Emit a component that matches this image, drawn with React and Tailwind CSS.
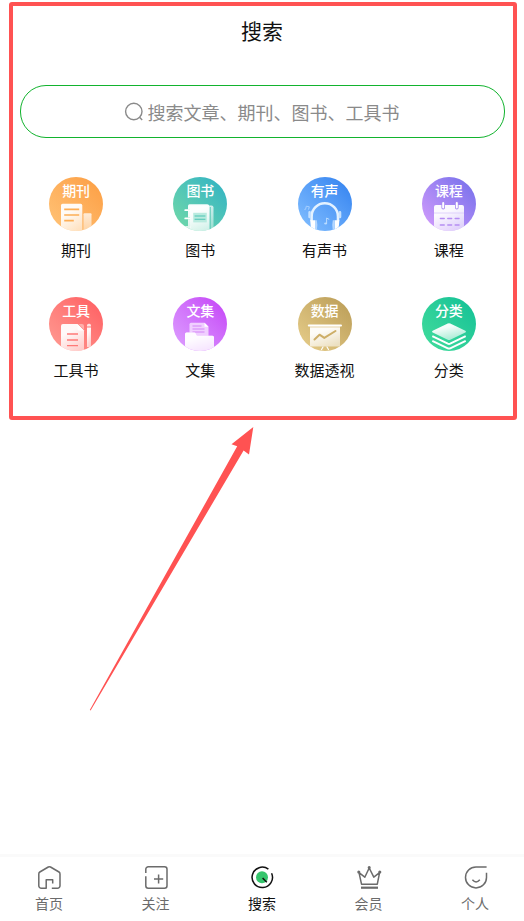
import React from "react";

function Journal() {
  return (
    <>
      <rect x="34.5" y="36.3" width="8" height="20" rx="1" fill="url(#fade)" />
      <rect x="12" y="26.8" width="21.3" height="30" rx="1.6" fill="url(#sheet)" />
      <path d="M15.2 32.3h15M15.2 38h15M15.2 43.6h9.6" stroke="#fdae55" strokeWidth="1.7" />
    </>
  );
}

function Book() {
  return (
    <>
      <path d="M17 28.4h21.5q2 0 2 2V54H17z" fill="url(#fade)" />
      <path d="M37.3 30v24" stroke="#5cc8b6" strokeWidth="0.9" />
      <path
        d="M16.6 27.3h17.6q2 0 2 2V54H15v-3.2h2v-1.6h-2v-7h2v-1.6h-2V34h2v-1.6h-2V29q0-1.7 1.6-1.7z"
        fill="url(#sheet)"
      />
      <path d="M12.2 33.2h4.6M12.2 41.4h4.6M12.2 50h4.6" stroke="#fff" strokeWidth="1.7" strokeLinecap="round" />
      <rect x="20.2" y="35.8" width="13.6" height="9.6" fill="#b9ebdf" />
      <path d="M21.6 39h10.8M21.6 42.2h10.8" stroke="#4cc4b4" strokeWidth="1.1" />
    </>
  );
}

function Headphones() {
  return (
    <>
      <path d="M13.6 44v-4.5a13.200 13.200 0 0 1 26.400 0V44" fill="none" stroke="#e4f2ff" strokeWidth="2.6" />
      <path d="M11.6 35.400v4.600M42 35.400v4.600" stroke="#c3e0ff" strokeWidth="2.6" strokeLinecap="round" />
      <path d="M12.200 43.200h4.800v10h-2.800q-2-4.500-2-10zM36.600 43.200h4.800q0 5.500-2 10h-2.800z" fill="#fff" />
      <path d="M17 43.200h1.800q1.200 5 0 10H17zM34.800 43.200h1.800v10h-1.800q-1.200-5 0-10z" fill="#b4d7ff" />
      <path d="M28.600 46.500v-5.500l2.600 1.400" fill="none" stroke="#b9dbff" strokeWidth="1" />
      <ellipse cx="27.6" cy="46.5" rx="1.5" ry="1.1" fill="#b9dbff" />
      <path d="M7.600 32.200l.7-3 3 .6-.8 2.800M6.400 32.400h1.200" fill="none" stroke="#a6cfff" strokeWidth="1" />
    </>
  );
}

function Calendar() {
  return (
    <>
      <rect x="12" y="28" width="30" height="28" rx="2" fill="url(#sheet)" />
      <path d="M12 36h30" stroke="#d9c9fb" strokeWidth="0.8" />
      <path d="M21.2 26v4.8M34.8 26v4.8" stroke="#a78af0" strokeWidth="3.6" strokeLinecap="round" />
      <path d="M21.2 26v4.4M34.8 26v4.4" stroke="#fff" strokeWidth="2" strokeLinecap="round" />
      <path
        d="M18.400 41.600h3.800M25.800 41.600h3.800M33.200 41.600h3.800M18.400 48h3.800M25.800 48h3.800M33.200 48h3.800"
        stroke="#b58df2"
        strokeWidth="1.5"
        strokeLinecap="round"
      />
    </>
  );
}

function Tools() {
  return (
    <>
      <path d="M14 27h14.500l6.500 6.500V56H12V29q0-2 2-2z" fill="url(#sheet)" />
      <path d="M28.500 27v5q0 1.500 1.500 1.500h5z" fill="#fff" />
      <path d="M29.500 27H33q2 0 2 2v3.500z" fill="#ffb0ac" />
      <path d="M18 37h11M18 43h11M18 48.600h11" stroke="#ff7a78" strokeWidth="1.3" />
      <path d="M38 28.400q0-1.600 1.600-1.600h.8q1.600 0 1.600 1.600v1.200h-4z" fill="#ffe2e0" />
      <path d="M38 30.400h4V50h-4z" fill="url(#sheet)" />
    </>
  );
}

function Collection() {
  return (
    <>
      <path d="M18 25.800h13.500l4 4V42H16.500V27.300q0-1.500 1.500-1.500z" fill="#f0cfff" />
      <path d="M31.500 25.800v4h4z" fill="#fff" />
      <path d="M19.500 29h9M19.500 32h12M19.500 35h12" stroke="#cf7cf6" strokeWidth="0.9" />
      <path
        d="M13.500 35.600h7.800q1 0 1.500 1l.6 1.400q.4.8 1.400.8h14.700q1.500 0 1.500 1.500V56H12V37.100q0-1.500 1.500-1.500z"
        fill="#e9bcff"
      />
      <path
        d="M13.500 35.600h7.800q1 0 1.500 1l.6 1.400q.4.8 1.400.8h14.700q1.500 0 1.500 1.500V56H12V37.100q0-1.500 1.500-1.500z"
        fill="url(#sheet)"
      />
    </>
  );
}

function Data() {
  return (
    <>
      <path d="M12 29h30v20.500H12z" fill="url(#sheet)" />
      <rect x="9.8" y="27.6" width="34.2" height="2" rx="1" fill="#fff" />
      <path d="M12 30h30" stroke="#dcc388" strokeWidth="0.7" />
      <path
        d="M16.500 42.500l5-4.800 4.800 3.200 11.200-6.900"
        fill="none"
        stroke="#cdae67"
        strokeWidth="2"
        strokeLinecap="round"
        strokeLinejoin="round"
      />
      <path d="M23.500 52.500l1.500-2.500M30.500 52.500l-1.500-2.500" stroke="#fff" strokeWidth="1.2" strokeLinecap="round" />
    </>
  );
}

function Layers() {
  return (
    <>
      <path
        d="M28.300 26.600l15 7.100q1.600.9 0 1.800l-15 7.200q-1.300.6-2.600 0l-15-7.200q-1.600-.9 0-1.800l15-7.100q1.300-.6 2.600 0z"
        fill="url(#sheet)"
      />
      <path
        d="M10.300 39.200l15.500 7.500q1.200.5 2.400 0l15.500-7.500M10.300 43.800l15.500 7.500q1.200.5 2.400 0l15.500-7.500"
        fill="none"
        stroke="#fff"
        strokeWidth="1.9"
      />
    </>
  );
}

const categories = [
  { badge: "期刊", label: "期刊", Art: Journal, tone: "from-[#ffc478] to-[#fc9d40]" },
  { badge: "图书", label: "图书", Art: Book, tone: "from-[#72daa6] to-[#2bb1c4]" },
  { badge: "有声", label: "有声书", Art: Headphones, tone: "from-[#84c0ff] to-[#2f80ef]" },
  { badge: "课程", label: "课程", Art: Calendar, tone: "from-[#d79dfc] to-[#726dea]" },
  { badge: "工具", label: "工具书", Art: Tools, tone: "from-[#ff9c94] to-[#ff5a60]" },
  { badge: "文集", label: "文集", Art: Collection, tone: "from-[#dda0ff] to-[#c43cf6]" },
  { badge: "数据", label: "数据透视", Art: Data, tone: "from-[#e8cf8c] to-[#b99b55]" },
  { badge: "分类", label: "分类", Art: Layers, tone: "from-[#41dd9c] to-[#0bc096]" },
];

function Category({ badge, label, Art, tone }) {
  return (
    <a href="#" className="flex flex-col items-center gap-[7px]">
      <span className={`flex size-[54px] flex-col items-center overflow-hidden rounded-full bg-linear-to-tr ${tone}`}>
        <span className="py-px text-sm/6 font-medium text-white">{badge}</span>
        <svg viewBox="0 26 54 28" className="h-7 w-[54px] overflow-visible" aria-hidden="true">
          <Art />
        </svg>
      </span>
      <span className="text-[15px]/6 text-[#111]">{label}</span>
    </a>
  );
}

const tabs = [
  {
    label: "首页",
    art: (
      <path d="M15.700 18.600v-3.900H9.200v8.600H4.400a2.600 2.600 0 0 1-2.600-2.600V8.900q0-1.300 1-1.900L11.300 2q1.100-.6 2.200 0l8.500 5q1 .6 1 1.900v11.800a2.600 2.600 0 0 1-2.600 2.600h-5.600" />
    ),
  },
  {
    label: "关注",
    art: (
      <path d="M1.800 8V4.300a2.500 2.500 0 0 1 2.500-2.500h16.200A2.500 2.500 0 0 1 23 4.300v16.500a2.500 2.500 0 0 1-2.500 2.500H4.300a2.500 2.500 0 0 1-2.500-2.500v-9.500M10 14h9.200M14.600 9.400v9.200" />
    ),
  },
  {
    label: "搜索",
    active: true,
    art: (
      <>
        <circle cx="12" cy="12.3" r="6" fill="#35c56c" stroke="none" />
        <path d="M18.400 4.200A10.200 10.200 0 1 0 21.600 8.200M12.600 13l4.200 4.200" />
      </>
    ),
  },
  {
    label: "会员",
    art: (
      <>
        <path d="M4.500 19.200L2 7.600l5.800 4.600L12.200 3l4.600 9.200L22.600 7.600l-2.300 11.600z" />
        <path d="M4 22.700h17" strokeWidth="2.2" />
        <circle cx="1.8" cy="7" r="0.8" fill="currentColor" />
        <circle cx="12.2" cy="2.5" r="0.8" fill="currentColor" />
        <circle cx="22.8" cy="7" r="0.8" fill="currentColor" />
      </>
    ),
  },
  {
    label: "个人",
    art: <path d="M23.600 1.900H13a10.500 10.500 0 1 0 10.500 10.500V7.800M9.400 14.800q3.700 4.200 7.400 0" />,
  },
];

function Tab({ label, art, active }) {
  return (
    <button
      type="button"
      aria-current={active ? "page" : undefined}
      className={`flex w-8 flex-col items-center gap-1 ${active ? "text-[#111]" : "text-[#6b6b6b]"}`}
    >
      <svg
        viewBox="0 0 24 24"
        fill="none"
        stroke="currentColor"
        strokeWidth="1.5"
        strokeLinejoin="round"
        className="size-6 overflow-visible"
        aria-hidden="true"
      >
        {art}
      </svg>
      <span className="text-sm/5 whitespace-nowrap">{label}</span>
    </button>
  );
}

export default function App() {
  return (
    <div className="relative flex min-h-screen flex-col bg-white font-['Noto_Sans_CJK_SC',sans-serif]">
      <svg className="absolute size-0" aria-hidden="true">
        <defs>
          <linearGradient id="sheet" x1="0.3" y1="0" x2="0.7" y2="1">
            <stop offset="0.25" stopColor="#fff" stopOpacity="0.95" />
            <stop offset="1" stopColor="#fff" stopOpacity="0.55" />
          </linearGradient>
          <linearGradient id="fade" x1="0" y1="0" x2="0" y2="1">
            <stop offset="0" stopColor="#fff" stopOpacity="0.75" />
            <stop offset="1" stopColor="#fff" stopOpacity="0.35" />
          </linearGradient>
        </defs>
      </svg>

      <section className="relative pb-10">
        <h1 className="pt-3.5 text-center text-[21px]/8 text-[#111]">搜索</h1>
        <label className="mt-[39px] mr-[19px] ml-5 flex h-[53px] items-center justify-center gap-1 rounded-[26px] border border-[#12b32e]">
          <svg viewBox="0 0 20 20" fill="none" stroke="#8a8a8a" strokeWidth="1.4" className="size-5" aria-hidden="true">
            <circle cx="9.8" cy="9.5" r="8.2" />
            <path d="M15.600 15.300l2.600 2.600" />
          </svg>
          <input
            type="text"
            aria-label="搜索"
            placeholder="搜索文章、期刊、图书、工具书"
            className="field-sizing-content min-w-[254px] text-lg/10 text-[#333] outline-none placeholder:text-[#8a8a8a]"
          />
        </label>
        <div className="mt-[39px] grid grid-cols-4 gap-y-[35px] pr-[13px] pl-[14px]">
          {categories.map((c) => (
            <Category key={c.badge} {...c} />
          ))}
        </div>
        <div className="pointer-events-none absolute top-0.5 right-[7px] bottom-0.5 left-[9px] rounded-[3px] border-4 border-[#ff5252]" />
      </section>

      <main className="grow">
        <svg viewBox="0 0 166 286" className="mt-1 ml-[89px] h-[286px] w-[166px]" fill="#ff5252" aria-hidden="true">
          <path d="M164.300 1L142.500 18.300l5.700 2L.8 284l.8.500L154.600 24.500l5.400 4z" />
        </svg>
      </main>

      <nav className="flex justify-between border-t-[3px] border-[#fafafa] bg-white px-[33px] pt-2 pb-2">
        {tabs.map((t) => (
          <Tab key={t.label} {...t} />
        ))}
      </nav>
    </div>
  );
}
